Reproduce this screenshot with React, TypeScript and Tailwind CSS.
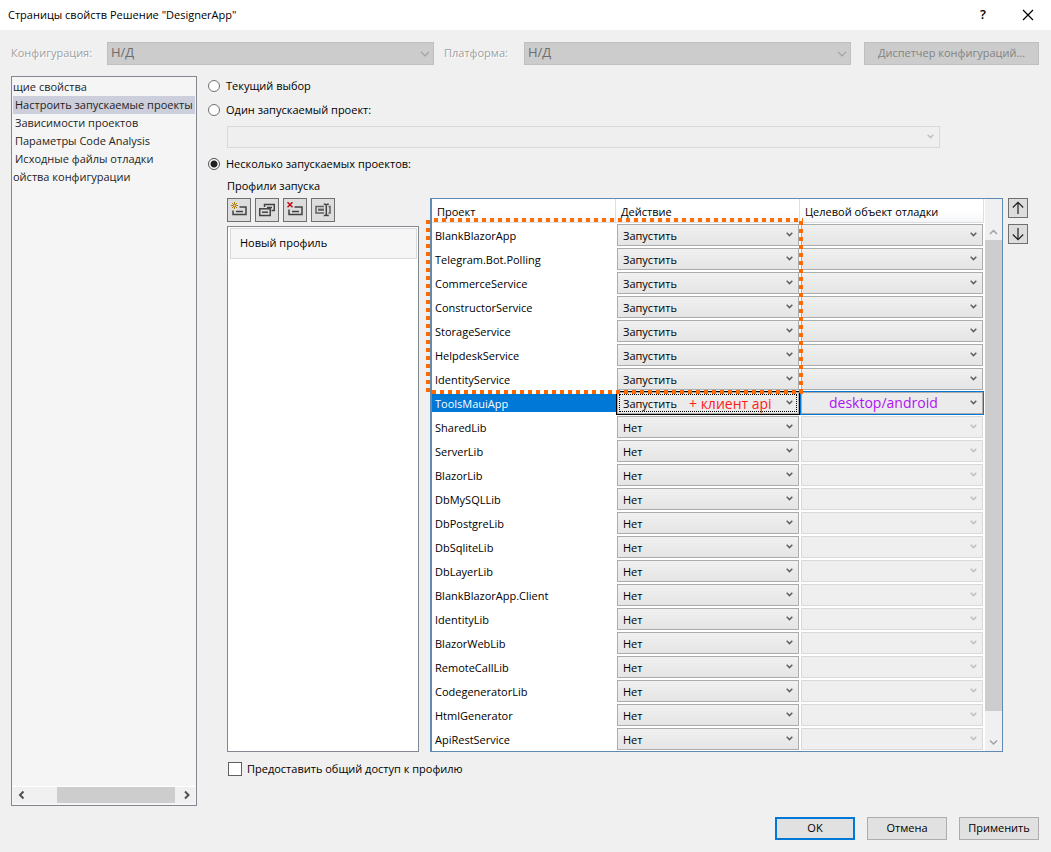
import type { ReactNode } from 'react'

type Row = { name: string; action: string; selected?: boolean }

const rows: Row[] = [
    { name: 'BlankBlazorApp', action: 'Запустить' },
    { name: 'Telegram.Bot.Polling', action: 'Запустить' },
    { name: 'CommerceService', action: 'Запустить' },
    { name: 'ConstructorService', action: 'Запустить' },
    { name: 'StorageService', action: 'Запустить' },
    { name: 'HelpdeskService', action: 'Запустить' },
    { name: 'IdentityService', action: 'Запустить' },
    { name: 'ToolsMauiApp', action: 'Запустить', selected: true },
    { name: 'SharedLib', action: 'Нет' },
    { name: 'ServerLib', action: 'Нет' },
    { name: 'BlazorLib', action: 'Нет' },
    { name: 'DbMySQLLib', action: 'Нет' },
    { name: 'DbPostgreLib', action: 'Нет' },
    { name: 'DbSqliteLib', action: 'Нет' },
    { name: 'DbLayerLib', action: 'Нет' },
    { name: 'BlankBlazorApp.Client', action: 'Нет' },
    { name: 'IdentityLib', action: 'Нет' },
    { name: 'BlazorWebLib', action: 'Нет' },
    { name: 'RemoteCallLib', action: 'Нет' },
    { name: 'CodegeneratorLib', action: 'Нет' },
    { name: 'HtmlGenerator', action: 'Нет' },
    { name: 'ApiRestService', action: 'Нет' },
]

const SmallChevron = ({ twClass }: { twClass: string }) => (
    <svg viewBox="0 0 7 5" className={`pointer-events-none absolute right-[6px] h-[5px] w-[7px] ${twClass}`}>
        <path d="M0.7 0.8L3.5 3.6L6.3 0.8" fill="none" stroke="currentColor" strokeWidth="1.5" />
    </svg>
)

const ConfigSelect = ({ id }: { id: string }) => (
    <div className="relative flex h-[23px] min-w-0 flex-1">
        <select
            id={id}
            disabled
            className="w-full appearance-none border border-[#bfbfbf] bg-[#cccccc] pl-[3px] text-[13px] text-[#6d6d6d] opacity-100"
        >
            <option>Н/Д</option>
        </select>
        <svg viewBox="0 0 10 6" className="pointer-events-none absolute top-[9px] right-1 h-[6px] w-[10px]">
            <path d="M1 0.8L5 4.8L9 0.8" fill="none" stroke="#a0a0a0" strokeWidth="1.2" />
        </svg>
    </div>
)

const CellSelect = ({ label, value, twClass, disabled }: { label: string; value: string; twClass: string; disabled?: boolean }) => (
    <div className="relative flex h-[22px]">
        <select
            aria-label={label}
            disabled={disabled}
            defaultValue={value}
            className={`w-full appearance-none pt-[2px] pl-[5px] text-[11px] opacity-100 ${twClass}`}
        >
            {value ? <option>{value}</option> : <option value="" />}
        </select>
        <SmallChevron twClass={disabled ? 'top-2 text-[#bfbfbf]' : 'top-2 text-[#606060]'} />
    </div>
)

const ToolButton = ({ label, children }: { label: string; children: ReactNode }) => (
    <button
        type="button"
        aria-label={label}
        className="flex size-6 items-center justify-center border border-[#707070] bg-[#dddddd]"
    >
        <svg viewBox="0 0 16 16" className="size-4 shrink-0" fill="none" stroke="#424242" strokeWidth="1.5">
            {children}
        </svg>
    </button>
)

const MoveButton = ({ label, d }: { label: string; d: string }) => (
    <button
        type="button"
        aria-label={label}
        className="flex size-5 items-center justify-center border border-[#707070] bg-[#dddddd]"
    >
        <svg viewBox="0 0 16 16" className="size-4" fill="none" stroke="#212121" strokeWidth="1.2">
            <path d={d} />
        </svg>
    </button>
)

const RadioRow = ({ label, checked }: { label: string; checked?: boolean }) => (
    <label className="flex h-5 items-center gap-[6px]">
        <input
            type="radio"
            name="startup"
            defaultChecked={checked}
            className="size-[12px] appearance-none rounded-full border border-[#707070] bg-white checked:border-[#505050] checked:bg-[radial-gradient(circle,#212121_3px,#ffffff_4px)]"
        />
        {label}
    </label>
)

const NavTree = () => (
    <nav className="flex w-[186px] shrink-0 flex-col border border-[#828790] bg-[#f5f5f5] p-px">
        <ul className="flex-1 overflow-hidden leading-[18px] whitespace-nowrap text-[#1e1e1e]">
            <li>щие свойства</li>
            <li className="bg-[#cccedb] pl-[2px]">Настроить запускаемые проекты</li>
            <li className="pl-[2px]">Зависимости проектов</li>
            <li className="pl-[2px]">Параметры Code Analysis</li>
            <li className="pl-[2px]">Исходные файлы отладки</li>
            <li>ойства конфигурации</li>
        </ul>
        <div className="mb-px flex h-[17px] items-center border-t border-white bg-[#f0f0f0] text-[#505050]">
            <svg viewBox="0 0 16 16" className="size-4">
                <path d="M10.5 4.5L7 8L10.5 11.5" fill="none" stroke="currentColor" strokeWidth="2" />
            </svg>
            <div className="ml-7 h-4 flex-1 bg-[#cdcdcd]" />
            <svg viewBox="0 0 16 16" className="ml-1 size-4">
                <path d="M6 4.5L9.5 8L6 11.5" fill="none" stroke="currentColor" strokeWidth="2" />
            </svg>
        </div>
    </nav>
)

const Profiles = () => (
    <div className="flex w-48 shrink-0 flex-col gap-1">
        <div className="flex gap-1">
            <ToolButton label="Создать профиль">
                <path d="M8.5 5H15V12.5H2V8.5" />
                <path d="M5 9.5H12" />
                <path d="M3.5 0V7M0 3.5H7M1 1L6 6M6 1L1 6" stroke="#b27c00" strokeWidth="1" />
                <circle cx="3.5" cy="3.5" r="1.3" fill="#dddddd" stroke="#b27c00" strokeWidth="1" />
            </ToolButton>
            <ToolButton label="Копировать профиль">
                <path d="M5.5 5V2.5H15.3V8.5H12.5" />
                <path d="M8 5.5H13" />
                <rect x="0.7" y="6.8" width="10.5" height="6.7" />
                <path d="M3 10.2H9" />
            </ToolButton>
            <ToolButton label="Удалить профиль">
                <path d="M7.5 5H15V12.5H2V7.5" />
                <path d="M5 9.5H12" />
                <path d="M0.5 0.2L5.5 5.2M5.5 0.2L0.5 5.2" stroke="#c50b17" strokeWidth="1.5" />
            </ToolButton>
            <ToolButton label="Переименовать профиль">
                <path d="M9 4.5H1V11H9M13.5 4.5H15V11H13.5" stroke="#606060" />
                <path d="M3 7.7H9" stroke="#606060" strokeWidth="2.2" />
                <path d="M8.8 2.2H10.3L11.3 3.2L12.3 2.2H13.8M11.3 3V13M8.8 13.6H10.3L11.3 12.6L12.3 13.6H13.8" />
            </ToolButton>
        </div>
        <ul className="flex-1 border border-[#828790] bg-white py-px pr-px pl-[2px]">
            <li className="flex h-[31px] items-center border border-[#dadada] bg-[#f6f6f6] pl-[9px]">Новый профиль</li>
        </ul>
    </div>
)

// dotted frame around the projects started together
const DottedFrame = () => (
    <svg
        className="pointer-events-none absolute top-[19px] -left-[6px] h-44 w-[calc(100%*2/3+9px)]"
        stroke="#ff6a00"
        strokeWidth="4"
        strokeDasharray="4 4"
    >
        <line x1="8" y1="2" x2="100%" y2="2" />
        <line x1="6" y1="174" x2="100%" y2="174" />
        <line x1="2" y1="2" x2="2" y2="100%" />
        <svg x="100%" overflow="visible">
            <line x1="-2" y1="3" x2="-2" y2="176" />
        </svg>
    </svg>
)

const ProjectTable = () => (
    <div className="flex min-w-0 flex-1 border border-l-2 border-[#5e8ab4] bg-white">
        <div className="relative min-w-0 flex-1">
            <table className="w-full table-fixed border-separate border-spacing-0">
                <thead>
                    <tr className="h-6 bg-linear-to-b from-white from-50% to-[#f4f5f7] text-left">
                        {['Проект', 'Действие', 'Целевой объект отладки'].map((title) => (
                            <th
                                key={title}
                                className="border-r border-b border-[#dfdfdf] p-0 pt-[3px] pl-[5px] font-normal whitespace-nowrap"
                            >
                                {title}
                            </th>
                        ))}
                    </tr>
                </thead>
                <tbody>
                    {rows.map(({ name, action, selected }) => (
                        <tr key={name} className="h-6">
                            <td className="p-0">
                                <div
                                    className={`h-[18px] pl-[3px] leading-[19px] ${selected ? 'bg-[#0078d7] text-white' : ''}`}
                                >
                                    {name}
                                </div>
                            </td>
                            <td className="relative p-0 px-px">
                                <CellSelect
                                    label={`Действие ${name}`}
                                    value={action}
                                    twClass={
                                        selected
                                            ? 'border border-[#acacac] bg-[#ebebeb] shadow-[0_0_0_1px_#000000] outline outline-dotted outline-black -outline-offset-3'
                                            : 'border border-[#acacac] bg-linear-to-b from-[#f0f0f0] to-[#e5e5e5]'
                                    }
                                />
                                {selected && (
                                    <span className="pointer-events-none absolute top-[3px] left-[73px] text-sm leading-5 font-medium whitespace-nowrap text-[#ff1a1a]">
                                        + клиент api
                                    </span>
                                )}
                            </td>
                            <td className="relative p-0 px-px">
                                <CellSelect
                                    label={`Целевой объект отладки ${name}`}
                                    value=""
                                    disabled={action === 'Нет'}
                                    twClass={
                                        action === 'Нет'
                                            ? 'border border-[#d9d9d9] bg-[#efefef]'
                                            : selected
                                              ? 'border border-[#acacac] bg-[#ebebeb] shadow-[0_0_0_1px_#0078d7]'
                                              : 'border border-[#acacac] bg-linear-to-b from-[#f0f0f0] to-[#e5e5e5]'
                                    }
                                />
                                {selected && (
                                    <span className="pointer-events-none absolute top-[2px] left-[29px] text-sm leading-5 font-medium text-[#b012f5]">
                                        desktop/android
                                    </span>
                                )}
                            </td>
                        </tr>
                    ))}
                </tbody>
            </table>
            <DottedFrame />
        </div>
        <div className="ml-px flex w-[17px] flex-col items-center bg-[#f0f0f0] pt-6 text-[#a0a0a0]">
            <svg viewBox="0 0 17 17" className="size-[17px]">
                <path d="M5 11L8.5 7.5L12 11" fill="none" stroke="currentColor" strokeWidth="1.5" />
            </svg>
            <div className="w-full flex-1 bg-[#cdcdcd]" />
            <svg viewBox="0 0 17 17" className="mt-[23px] size-[17px]">
                <path d="M5 6.5L8.5 10L12 6.5" fill="none" stroke="currentColor" strokeWidth="1.5" />
            </svg>
        </div>
    </div>
)

const StartupPanel = () => (
    <main className="flex min-w-0 flex-1 flex-col">
        <RadioRow label="Текущий выбор" />
        <div className="mt-1">
            <RadioRow label="Один запускаемый проект:" />
        </div>
        <div className="relative mt-[6px] mr-[99px] ml-[19px] flex h-[22px]">
            <select
                aria-label="Один запускаемый проект"
                disabled
                className="w-full appearance-none border border-[#d9d9d9] bg-[#efefef] opacity-100"
            >
                <option value="" />
            </select>
            <SmallChevron twClass="top-2 text-[#bfbfbf]" />
        </div>
        <div className="mt-[6px]">
            <RadioRow label="Несколько запускаемых проектов:" checked />
        </div>
        <div className="mt-[2px] ml-[19px] h-5 leading-5">Профили запуска</div>
        <div className="mt-[2px] mr-[11px] ml-[19px] flex">
            <Profiles />
            <div className="ml-[11px] flex min-w-0 flex-1">
                <ProjectTable />
            </div>
            <div className="ml-[5px] flex flex-col gap-[6px]">
                <MoveButton label="Вверх" d="M8 14V2.5M2.8 7.5L8 2.3L13.2 7.5" />
                <MoveButton label="Вниз" d="M8 2V13.5M2.8 8.5L8 13.7L13.2 8.5" />
            </div>
        </div>
        <label className="mt-[7px] ml-5 flex h-5 items-center gap-[5px]">
            <input type="checkbox" className="size-[14px] appearance-none border border-[#606060] bg-white" />
            Предоставить общий доступ к профилю
        </label>
    </main>
)

export default function App() {
    return (
        <div className="flex min-h-screen flex-col bg-[#f0f0f0] font-['Open_Sans','Noto_Sans',sans-serif] text-[11px] text-black">
            <header className="flex h-[30px] items-center bg-white pr-[17px] pl-2">
                <h1 className="flex-1">Страницы свойств Решение "DesignerApp"</h1>
                <button type="button" aria-label="Справка" className="mr-9 text-[13px] font-semibold">
                    ?
                </button>
                <button type="button" aria-label="Закрыть">
                    <svg viewBox="0 0 12 12" className="size-3">
                        <path d="M1 1L11 11M11 1L1 11" stroke="#000000" strokeWidth="1.2" />
                    </svg>
                </button>
            </header>
            <div className="flex h-[46px] items-center pr-3 pl-[11px] text-[#a0a0a0]">
                <label htmlFor="config" className="w-24 shrink-0 [text-shadow:1px_1px_0_#ffffff]">
                    Конфигурация:
                </label>
                <ConfigSelect id="config" />
                <label htmlFor="platform" className="ml-[10px] w-20 shrink-0 [text-shadow:1px_1px_0_#ffffff]">
                    Платформа:
                </label>
                <ConfigSelect id="platform" />
                <button
                    type="button"
                    disabled
                    className="ml-[13px] h-[23px] w-[175px] shrink-0 border border-[#bfbfbf] bg-[#cccccc] text-[#838383]"
                >
                    Диспетчер конфигураций...
                </button>
            </div>
            <div className="flex flex-1 gap-[11px] pr-3 pl-[11px]">
                <NavTree />
                <StartupPanel />
            </div>
            <footer className="flex justify-end gap-3 pt-[11px] pr-3 pb-3">
                <button type="button" className="h-[23px] w-20 border-2 border-[#0078d7] bg-[#e1e1e1]">
                    OK
                </button>
                <button type="button" className="h-[23px] w-20 border border-[#adadad] bg-[#e1e1e1]">
                    Отмена
                </button>
                <button type="button" className="h-[23px] w-20 border border-[#adadad] bg-[#e1e1e1]">
                    Применить
                </button>
            </footer>
        </div>
    )
}
